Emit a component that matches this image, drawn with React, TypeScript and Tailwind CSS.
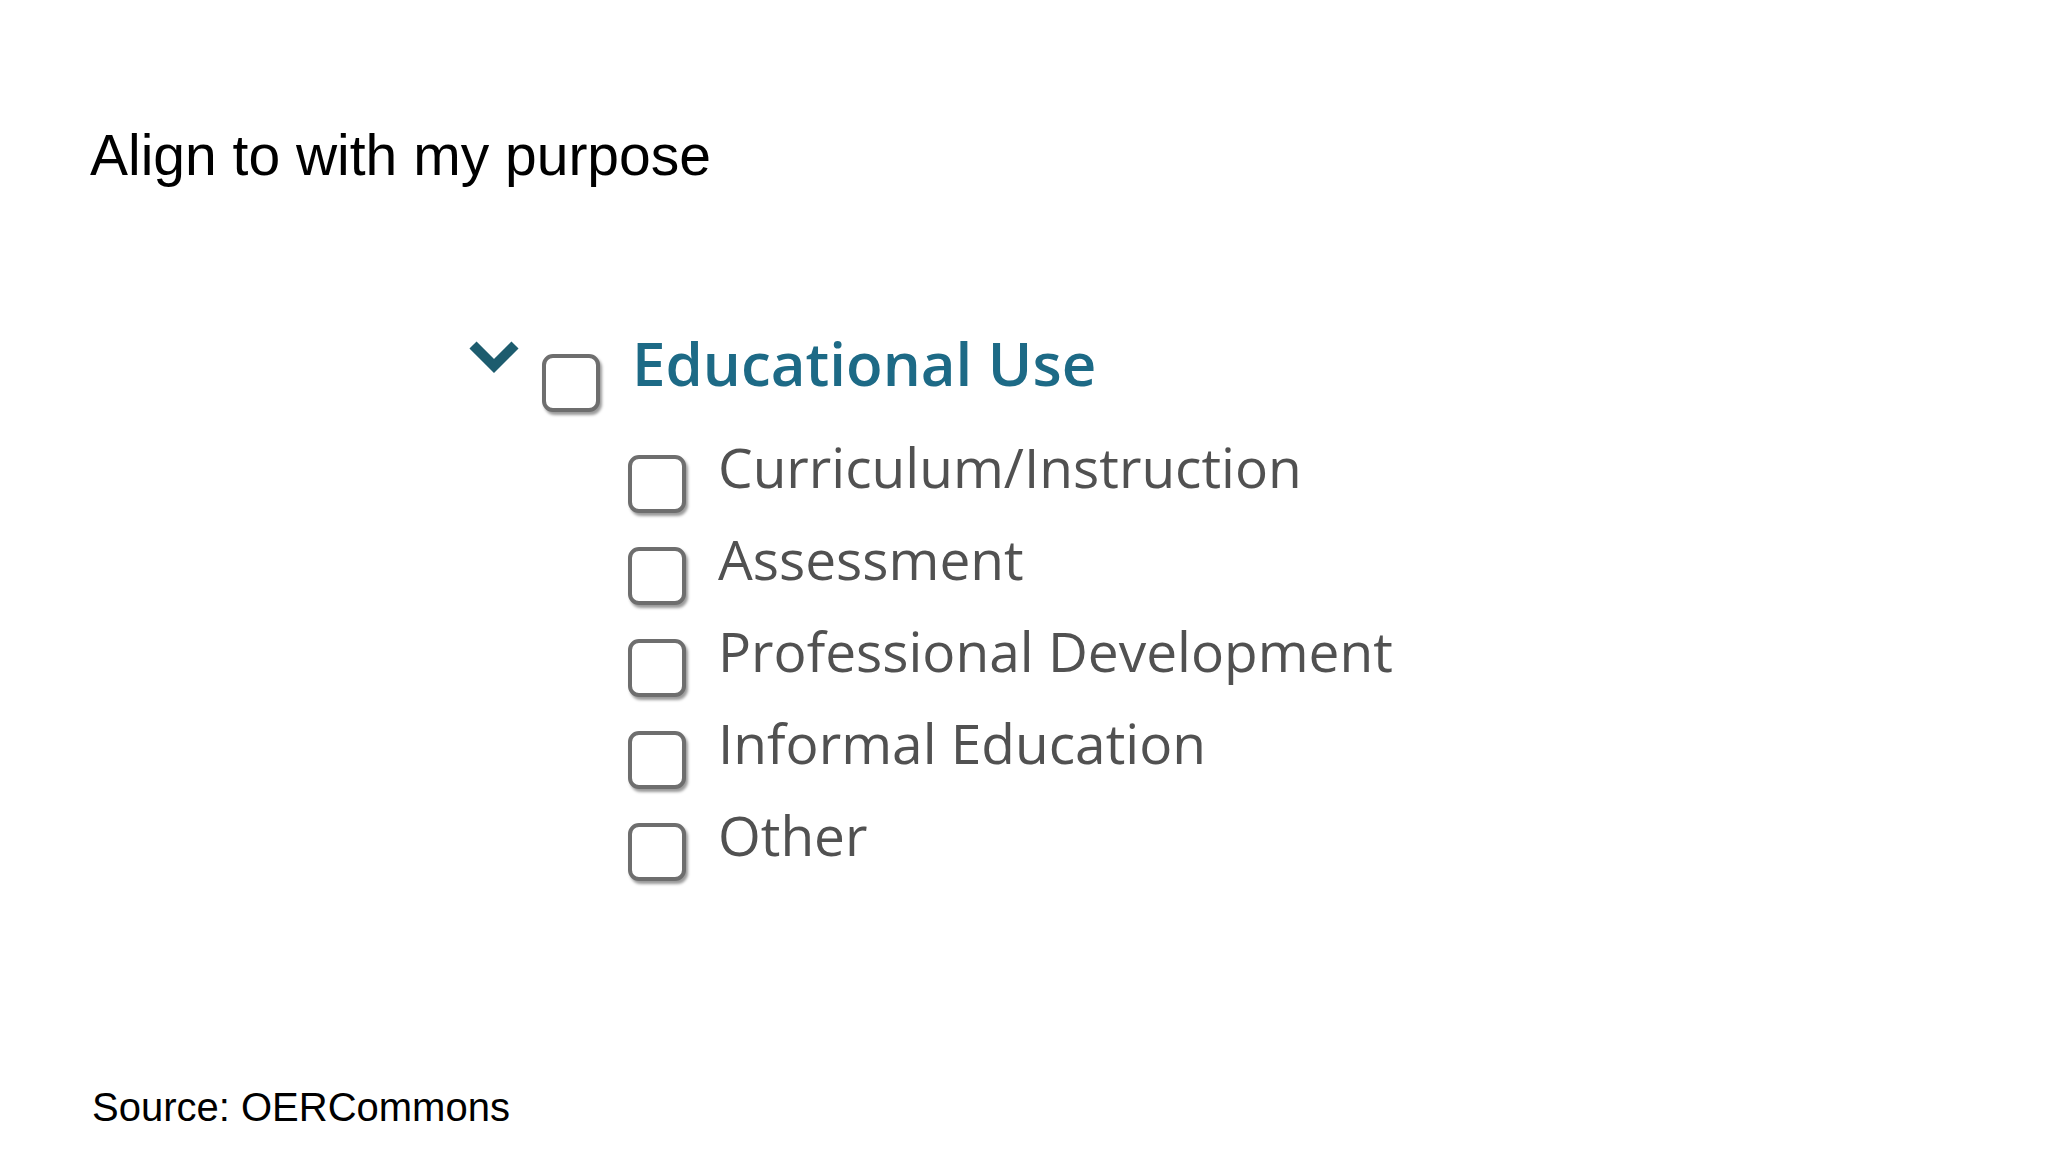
import React from 'react';

const items = [
  'Curriculum/Instruction',
  'Assessment',
  'Professional Development',
  'Informal Education',
  'Other',
];

function Box() {
  return (
    <div className="w-[58px] h-[58px] shrink-0 rounded-[11px] border-[4px] border-[#6e6e6e] bg-white shadow-[2px_3px_3px_rgba(0,0,0,0.4)]" />
  );
}

export default function App() {
  return (
    <div className="w-[2048px] h-[1152px] bg-white flex flex-col overflow-hidden">
      <h1 className="pl-[90px] pt-[127px] text-[57px] leading-none text-black font-['Liberation_Sans',Arial,sans-serif]">
        Align to with my purpose
      </h1>

      {/* OER Commons filter */}
      <div className="mt-[149px] font-['Open_Sans',sans-serif]">
        <div className="flex items-start pl-[468px]">
          <svg width="52" height="36" viewBox="0 0 52 36" className="mt-[7px] shrink-0">
            <polyline points="5,5 26,26 47,5" fill="none" stroke="#1d5c6e" strokeWidth="10" strokeLinejoin="miter" />
          </svg>
          <div className="ml-[22px] mt-[21px]">
            <Box />
          </div>
          <span className="ml-[32px] text-[60px] leading-none font-semibold text-[#1d6a86]">Educational Use</span>
        </div>

        <div className="mt-[27px]">
          {items.map((label) => (
            <div key={label} className="h-[92px] flex items-start pl-[628px]">
              <div className="mt-[16px]">
                <Box />
              </div>
              <span className="ml-[32px] text-[55px] leading-none text-[#515151]">{label}</span>
            </div>
          ))}
        </div>
      </div>

      <p className="mt-auto pb-[25px] pl-[92px] text-[40px] leading-none text-black font-['Liberation_Sans',Arial,sans-serif]">
        Source: OERCommons
      </p>
    </div>
  );
}
